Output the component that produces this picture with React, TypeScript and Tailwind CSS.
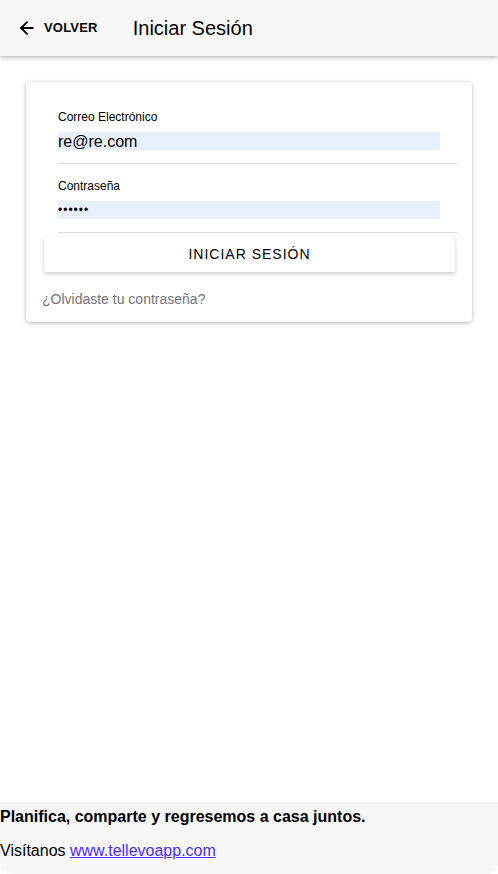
import { ArrowLeft } from "lucide-react"

export default function App() {
  return (
    <div className="relative flex h-[874px] flex-col overflow-hidden bg-white font-['Liberation_Sans',Arial,sans-serif] text-black">
      {/* Header */}
      <header className="flex h-14 shrink-0 items-center bg-[#f7f7f7] shadow-[0_2px_4px_rgba(0,0,0,0.25)] z-10">
        <button className="ml-[17px] flex items-center gap-[7px]">
          <ArrowLeft className="h-5 w-5" strokeWidth={2.2} />
          <span className="text-[13px] font-bold tracking-[0.2px]">VOLVER</span>
        </button>
        <h1 className="ml-[35px] text-[20px] font-medium">Iniciar Sesión</h1>
      </header>

      {/* Card */}
      <main className="flex-1 px-[26px] pt-[26px]">
        <div className="rounded bg-white pl-[18px] pr-[17px] pb-[12px] pt-[27px] shadow-[0_1px_4px_rgba(0,0,0,0.3)]">
          <div className="pl-[14px] -mr-[2px]">
            <label className="block text-[12px] leading-[16px]">Correo Electrónico</label>
            <div className="mt-[7px] mr-[17px] h-[18px] bg-[#e8f0fe] text-[16px] leading-[20px]">re@re.com</div>
            <div className="mt-[13px] border-t border-[#dcdcdc]" />
            <label className="mt-[14px] block text-[12px] leading-[16px]">Contraseña</label>
            <div className="mt-[7px] mr-[17px] h-[18px] bg-[#e8f0fe] text-[12px] leading-[18px] tracking-[1px]">••••••</div>
            <div className="mt-[13px] border-t border-[#dcdcdc]" />
          </div>
          <button className="mt-[4px] flex h-[35px] w-full items-center justify-center bg-white text-[14px] font-medium tracking-[1px] shadow-[0_2px_4px_rgba(0,0,0,0.2)]">
            INICIAR SESIÓN
          </button>
          <p className="mt-[17px] -ml-[2px] text-[14px] text-[#757575]">¿Olvidaste tu contraseña?</p>
        </div>
      </main>

      {/* Footer */}
      <footer className="h-[71px] shrink-0 border-t border-[#ececec] bg-[#f7f7f7] rounded-b-[12px]">
        <p className="mt-[3px] text-[16px] font-bold leading-[20px]">Planifica, comparte y regresemos a casa juntos.</p>
        <p className="mt-[14px] text-[16px] leading-[20px]">
          Visítanos{" "}
          <a href="#" className="text-[#4f2cf4] underline">www.tellevoapp.com</a>
        </p>
      </footer>
    </div>
  )
}
